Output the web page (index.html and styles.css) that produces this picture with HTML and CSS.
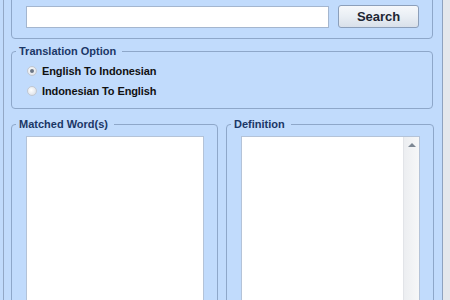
FILE: index.html
```html
<!DOCTYPE html>
<html>
<head>
<meta charset="utf-8">
<link rel="stylesheet" href="styles.css">
</head>
<body>
<div class="window">
  <div class="search-group">
    <input class="search-input" type="text">
    <button class="search-btn">Search</button>
  </div>
  <fieldset class="group options">
    <legend>Translation Option</legend>
    <div class="options-body">
      <div class="radio-row"><span class="radio checked"></span><span class="radio-label">English To Indonesian</span></div>
      <div class="radio-row"><span class="radio"></span><span class="radio-label">Indonesian To English</span></div>
    </div>
  </fieldset>
  <div class="lists">
    <fieldset class="group list-group">
      <legend>Matched Word(s)</legend>
      <div class="list-body">
        <div class="listbox"></div>
      </div>
    </fieldset>
    <fieldset class="group list-group">
      <legend>Definition</legend>
      <div class="list-body">
        <div class="listbox textbox">
          <div class="scrollbar"><span class="arrow-up"></span></div>
        </div>
      </div>
    </fieldset>
  </div>
</div>
</body>
</html>
```

FILE: styles.css
```css
html, body {
  margin: 0;
  padding: 0;
  height: 300px;
  overflow: hidden;
}
body {
  background: linear-gradient(to right, #c1dbfc 443px, #e4e7ec 443px);
  font-family: "Liberation Sans", Arial, sans-serif;
}
.window {
  margin-left: 3px;
  width: 440px;
  height: 300px;
  border-left: 1px solid #93a8c6;
  border-right: 1px solid #8ea2bf;
  background: #c1dbfc;
  padding: 0 9px 0 7px;
  box-sizing: border-box;
  display: flex;
  flex-direction: column;
  overflow: hidden;
}
.search-group {
  margin-top: -12px;
  height: 51px;
  flex-shrink: 0;
  box-sizing: border-box;
  border: 1px solid #8ea7c9;
  border-radius: 4px;
  display: flex;
  align-items: flex-start;
  padding: 16px 13px 0 14px;
  gap: 9px;
}
.search-input {
  width: 304px;
  height: 22px;
  box-sizing: border-box;
  border: 1px solid #a4b6cf;
  background: #fff;
  margin: 1px 0 0 0;
  padding: 0;
}
.search-btn {
  width: 81px;
  height: 23px;
  box-sizing: border-box;
  border: 1px solid #8c9fba;
  border-radius: 3px;
  background: linear-gradient(to bottom, #f6f8fb 0%, #e9eef4 50%, #d9e0ea 100%);
  font-family: "Liberation Sans", Arial, sans-serif;
  font-weight: bold;
  font-size: 13px;
  color: #1d2633;
  padding: 0;
  margin: 0;
}
.group {
  border: 1px solid #8ea7c9;
  border-radius: 4px;
  margin: 0;
  padding: 0;
  min-width: 0;
}
.group legend {
  margin-left: 4px;
  padding: 0 6px 0 3px;
  font-size: 11px;
  line-height: 13px;
  font-weight: bold;
  color: #1b3766;
}
.options {
  margin-top: 6px;
  height: 64px;
  flex-shrink: 0;
  box-sizing: border-box;
}
.options-body {
  padding: 3px 0 0 15px;
}
.radio-row {
  height: 20px;
  display: flex;
  align-items: center;
  gap: 5px;
}
.radio {
  width: 10px;
  height: 10px;
  border-radius: 50%;
  box-sizing: border-box;
  border: 1px solid #c2c8d1;
  background: radial-gradient(circle at 40% 40%, #ffffff 0%, #e6e9ee 60%, #cfd4db 100%);
  display: flex;
  align-items: center;
  justify-content: center;
}
.radio.checked::after {
  content: "";
  width: 4px;
  height: 4px;
  border-radius: 50%;
  background: #6b7686;
}
.radio-label {
  font-size: 11px;
  font-weight: bold;
  color: #111;
  letter-spacing: -0.1px;
}
.lists {
  margin-top: 9px;
  margin-bottom: -20px;
  flex: 1;
  display: grid;
  grid-template-columns: 207px 208px;
  gap: 8px;
  min-height: 0;
}
.list-group {
  display: flex;
  flex-direction: column;
}
.list-body {
  flex: 1;
  display: flex;
  padding: 5px 13px 0 14px;
}
.listbox {
  flex: 1;
  background: #fff;
  border: 1px solid #b4c3d8;
  box-sizing: border-box;
}
.textbox {
  display: flex;
  justify-content: flex-end;
}
.scrollbar {
  width: 16px;
  background: linear-gradient(to right, #eceef1, #f6f7f8);
  border-left: 1px solid #e2e4e8;
  display: flex;
  justify-content: center;
  align-items: flex-start;
  padding-top: 6px;
  box-sizing: border-box;
}
.arrow-up {
  width: 0;
  height: 0;
  border-left: 4px solid transparent;
  border-right: 4px solid transparent;
  border-bottom: 4px solid #7d8793;
}
```
